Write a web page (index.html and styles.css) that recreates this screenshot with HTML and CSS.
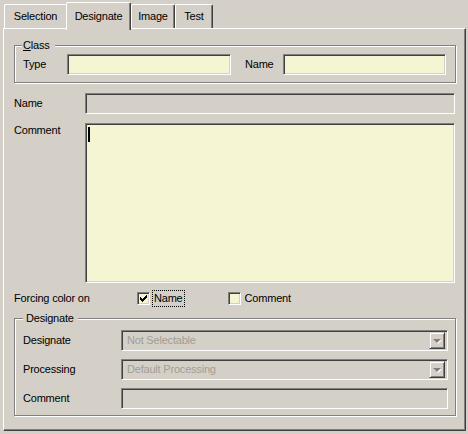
FILE: index.html
```html
<!DOCTYPE html>
<html>
<head>
<meta charset="utf-8">
<link rel="stylesheet" href="styles.css">
</head>
<body>
<div class="dialog">
  <div class="tabs">
    <div class="tab tab-selection">Selection</div>
    <div class="tab tab-designate active">Designate</div>
    <div class="tab tab-image">Image</div>
    <div class="tab tab-test">Test</div>
  </div>
  <div class="panel">
    <div class="group group-class">
      <span class="legend legend-class"><u>C</u>lass</span>
      <div class="class-row">
        <span class="lbl lbl-type">Type</span>
        <div class="field yellow f-type"></div>
        <span class="lbl lbl-cname">Name</span>
        <div class="field yellow f-cname"></div>
      </div>
    </div>

    <div class="row row-name">
      <span class="lbl lbl-main">Name</span>
      <div class="field grey f-main"></div>
    </div>

    <div class="row row-comment">
      <span class="lbl lbl-main lbl-top">Comment</span>
      <div class="field yellow f-main f-textarea"><span class="caret"></span></div>
    </div>

    <div class="force-row">
      <span class="lbl lbl-force">Forcing color on</span>
      <span class="check yellow">
        <svg width="9" height="9" viewBox="0 0 9 9"><path d="M1.5 3.5 L3.5 5.5 L7.5 1.5 M1.5 4.5 L3.5 6.5 L7.5 2.5 M1.5 5.5 L3.5 7.5 L7.5 3.5" fill="none" stroke="#000" stroke-width="1" shape-rendering="crispEdges"/></svg>
      </span>
      <span class="check-label focus">Name</span>
      <span class="check yellow check-2"></span>
      <span class="check-label check-label-2">Comment</span>
    </div>

    <div class="group group-des">
      <span class="legend legend-des">Designate</span>
      <div class="des-row">
        <span class="lbl lbl-des">Designate</span>
        <div class="field grey f-des combo">
          <span class="combo-text">Not Selectable</span>
          <span class="combo-btn"><span class="arrow"></span></span>
        </div>
      </div>
      <div class="des-row">
        <span class="lbl lbl-des">Processing</span>
        <div class="field grey f-des combo">
          <span class="combo-text">Default Processing</span>
          <span class="combo-btn"><span class="arrow"></span></span>
        </div>
      </div>
      <div class="des-row">
        <span class="lbl lbl-des">Comment</span>
        <div class="field grey f-des"></div>
      </div>
    </div>
  </div>
</div>
</body>
</html>
```

FILE: styles.css
```css
* { box-sizing: border-box; }

html, body {
  margin: 0;
  padding: 0;
  background: #d4d0c8;
}

body {
  font-family: "Liberation Sans", Arial, sans-serif;
  font-size: 11px;
  line-height: 13px;
  letter-spacing: -0.2px;
  color: #000;
  width: 468px;
  height: 434px;
  overflow: hidden;
}

.dialog {
  padding-top: 2px;
}

/* ---------- tabs ---------- */
.tabs {
  display: flex;
  align-items: flex-start;
  height: 28px;
  margin-left: 4px;
  margin-bottom: -2px;
  position: relative;
  z-index: 1;
}

.tab {
  height: 24px;
  margin-top: 2px;
  text-align: center;
  padding-top: 5px;
  background: #d4d0c8;
  border-top: 1px solid #fff;
  border-left: 1px solid #fff;
  border-right: 1px solid #404040;
  box-shadow: inset -1px 0 0 #808080;
  border-top-left-radius: 2px;
  border-top-right-radius: 2px;
}

.tab-selection { width: 62px; border-right: none; box-shadow: none; }
.tab-designate { width: 65px; }
.tab-image { width: 44px; }
.tab-test { width: 38px; }

.tab.active {
  height: 28px;
  margin-top: 0;
  padding-top: 7px;
  position: relative;
  z-index: 2;
}

/* ---------- panel ---------- */
.panel {
  margin-left: 3px;
  width: 463px;
  height: 403px;
  border: 1px solid;
  border-color: #fff #404040 #404040 #fff;
  box-shadow: inset -1px -1px 0 #808080;
  padding: 16px 0 0 10px;
}

/* ---------- group boxes ---------- */
.group {
  position: relative;
  width: 442px;
  border: 1px solid #808080;
  box-shadow: inset 1px 1px 0 #fff, 1px 1px 0 #fff;
}

.legend {
  position: absolute;
  top: -7px;
  background: #d4d0c8;
  white-space: nowrap;
}

.legend-class { left: 7px; padding: 0 5px 0 1px; }
.legend-des { left: 8px; padding: 0 4px 0 3px; }

.group-class {
  padding: 8px 0 7px 8px;
}

.class-row {
  display: flex;
  align-items: center;
  height: 21px;
}

.lbl { white-space: nowrap; }
.lbl-type { width: 44px; }
.f-type { width: 164px; }
.lbl-cname { width: 38px; margin-left: 14px; }
.f-cname { width: 163px; }

/* ---------- fields ---------- */
.field {
  height: 21px;
  border: 1px solid;
  border-color: #808080 #fff #fff #808080;
  box-shadow: inset 1px 1px 0 #404040, inset -1px -1px 0 #d4d0c8;
  flex: none;
}

.yellow { background: #f5f5d3; }
.grey { background: #d4d0c8; }

/* ---------- main rows ---------- */
.row {
  display: flex;
  align-items: center;
}

.row-name { margin-top: 10px; }
.row-comment { margin-top: 9px; align-items: flex-start; }

.lbl-main { width: 71px; }
.lbl-top { margin-top: 1px; }
.f-main { width: 370px; }

.f-textarea {
  height: 160px;
  padding: 3px 0 0 2px;
}

.caret {
  display: block;
  width: 2px;
  height: 15px;
  background: #000;
}

/* ---------- checkboxes ---------- */
.force-row {
  display: flex;
  align-items: center;
  margin-top: 9px;
  height: 13px;
}

.lbl-force { width: 123px; }

.check {
  width: 13px;
  height: 13px;
  border: 1px solid;
  border-color: #808080 #fff #fff #808080;
  box-shadow: inset 1px 1px 0 #404040, inset -1px -1px 0 #d4d0c8;
  display: flex;
  align-items: center;
  justify-content: center;
  flex: none;
}

.check svg { display: block; }

.check-label {
  line-height: 13px;
}

.focus {
  margin-left: 3px;
  outline: 1px dotted #000;
  padding: 1px 1px;
}

.check-2 { margin-left: 44px; }
.check-label-2 { margin-left: 4px; }

/* ---------- designate group ---------- */
.group-des {
  margin-top: 13px;
  padding: 11px 0 6px 8px;
  display: flex;
  flex-direction: column;
  gap: 8px;
}

.des-row {
  display: flex;
  align-items: center;
  height: 21px;
}

.lbl-des { width: 98px; }
.f-des { width: 327px; }

.combo {
  display: flex;
  align-items: center;
  padding: 2px 2px 2px 5px;
}

.combo-text {
  flex: 1;
  color: #a19e96;
  white-space: nowrap;
}

.combo-btn {
  width: 16px;
  height: 17px;
  border: 1px solid;
  border-color: #d4d0c8 #404040 #404040 #d4d0c8;
  box-shadow: inset 1px 1px 0 #fff, inset -1px -1px 0 #808080;
  background: #d4d0c8;
  display: flex;
  align-items: center;
  justify-content: center;
  flex: none;
}

.arrow {
  width: 0;
  height: 0;
  border-left: 4px solid transparent;
  border-right: 4px solid transparent;
  border-top: 4px solid #808080;
  filter: drop-shadow(1px 1px 0 #fff);
  margin-top: 1px;
}
```
